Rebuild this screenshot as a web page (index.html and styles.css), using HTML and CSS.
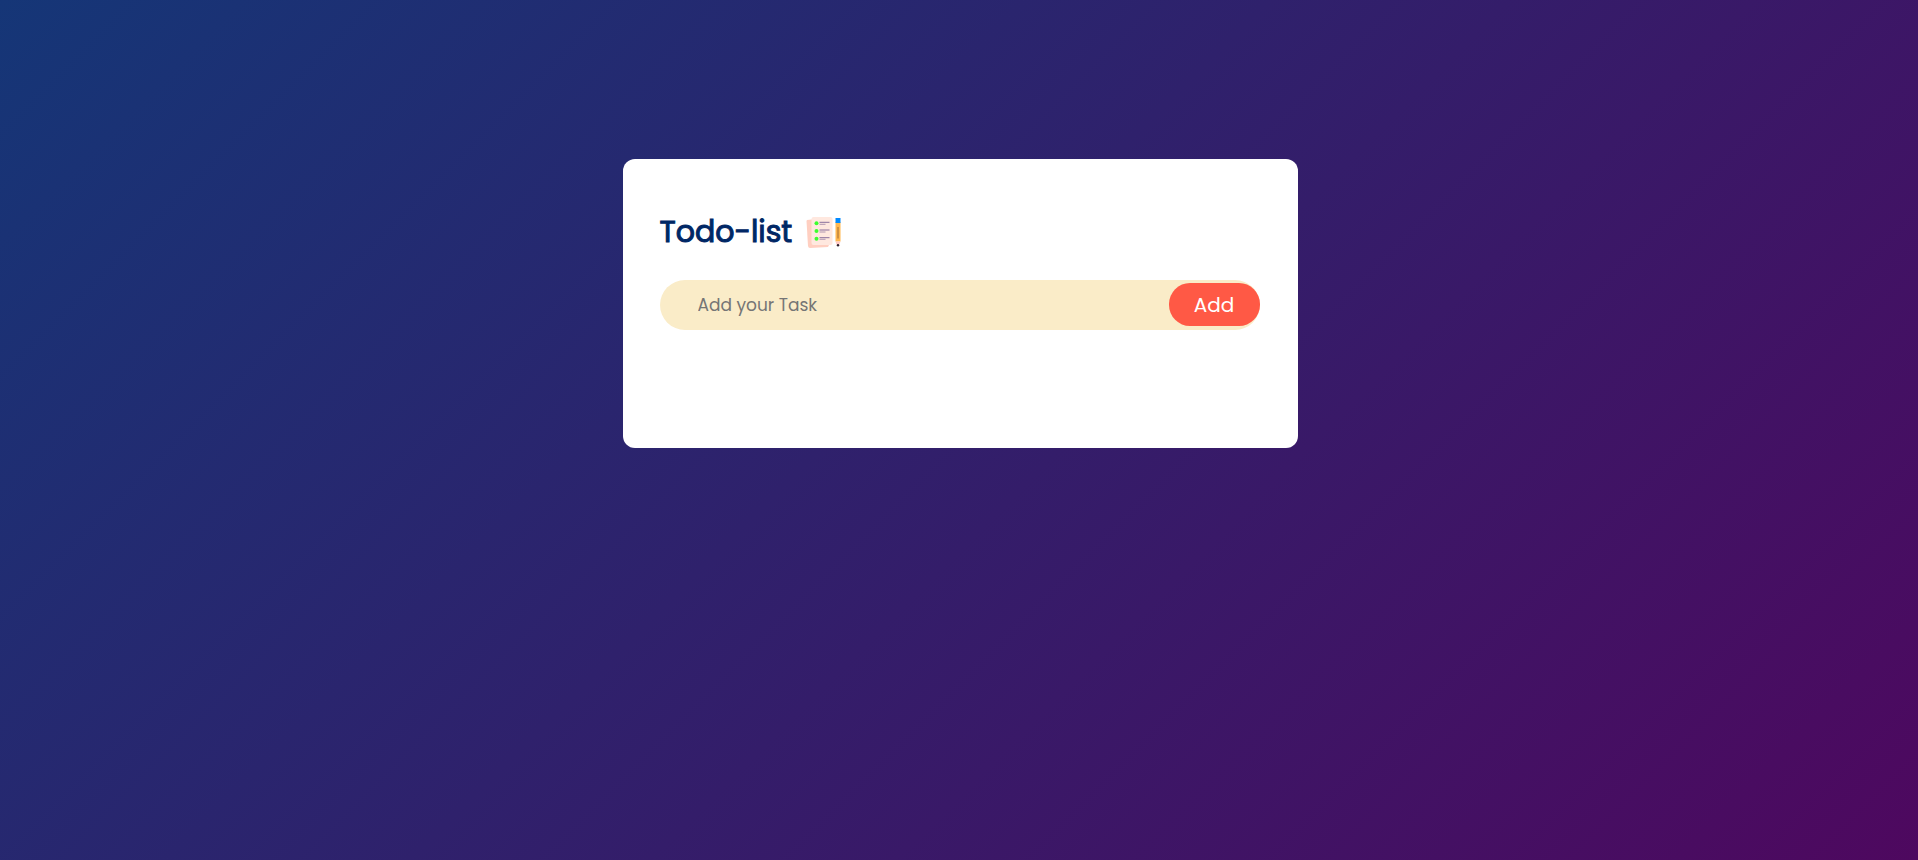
FILE: index.html
```html
<!DOCTYPE html>
<html lang="en">
<head>
<meta charset="utf-8">
<meta name="viewport" content="width=device-width, initial-scale=1">
<title>Todo-list</title>
<link rel="stylesheet" href="styles.css">
</head>
<body>
<main class="page">
  <section class="todo-app">
    <h1 class="title">Todo-list
      <svg class="title-icon" viewBox="0 0 38 38" aria-hidden="true">
        <path fill="#ffcfc1" d="M2 7 L20 5 L24 32 L23 34 L5 35 Q3.300 35 3 33 L1.500 8 Z"/>
        <rect x="6.500" y="4" width="21" height="28" rx="2" fill="#ffe8df"/>
        <g fill="#3dff2e">
          <circle cx="11.500" cy="10.300" r="2"/>
          <circle cx="11.500" cy="18" r="2"/>
          <circle cx="11.500" cy="25.700" r="2"/>
        </g>
        <g stroke="#7a6194" stroke-width=".9">
          <path d="M14.500 9.300H24.500M14.500 17H24.500M14.500 24.700H24.500"/>
          <path opacity=".65" d="M14.500 11.300H20.500M14.500 19H20.500M14.500 26.300H20.500"/>
        </g>
        <path fill="#ffb74f" d="M30.500 9h5v19.500h-5z"/>
        <path fill="#0089ff" d="M30.500 5h5v5h-5z"/>
        <path stroke="#a06a35" stroke-width="1" d="M33 14V25.500"/>
        <path fill="#ffc9c4" d="M30.500 28.500h5L34 32.500h-2z"/>
        <circle cx="33" cy="32.300" r="1.200" fill="#2d1d2a"/>
      </svg>
    </h1>
    <form class="row">
      <input class="task-input" type="text" placeholder="Add your Task" aria-label="Add your Task">
      <button class="add-button" type="button">Add</button>
    </form>
  </section>
</main>
</body>
</html>
```
FILE: styles.css
```css
* {
  box-sizing: border-box;
  margin: 0;
  padding: 0;
  font-family: Poppins, Inter, "Open Sans", sans-serif;
}

.page {
  min-height: 100vh;
  padding: 159px 12px 12px 14px;
  background: linear-gradient(135deg, #153677, #4e085f);
}

.todo-app {
  max-width: 675px;
  margin: 0 auto;
  padding: 50px 38px 118px 37px;
  border-radius: 12px;
  background: #fff;
}

.title {
  display: flex;
  align-items: center;
  gap: 13px;
  height: 46px;
  margin-bottom: 25px;
  color: #002765;
  font-size: 30px;
  font-weight: 400;
  line-height: 46px;
  -webkit-text-stroke: 1px #002765;
}

.title-icon {
  width: 38px;
  height: 38px;
}

.row {
  display: flex;
  height: 50px;
  padding: 3px 0 4px 38px;
  border-radius: 25px;
  background: #faecc8;
}

.task-input {
  flex: 1;
  min-width: 0;
  border: none;
  outline: none;
  background: transparent;
  color: #333;
  font-size: 17px;
}

.task-input::placeholder {
  color: #757575;
}

.add-button {
  width: 91px;
  border: none;
  border-radius: 21px;
  background: #ff5945;
  color: #fff;
  font-size: 20px;
  cursor: pointer;
}
```
